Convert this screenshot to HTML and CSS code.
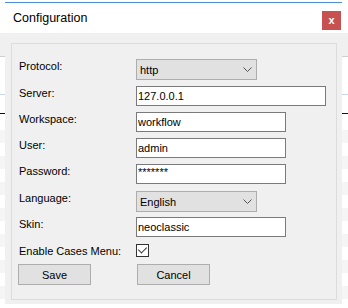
FILE: index.html
```html
<!DOCTYPE html>
<html lang="en">
<head>
  <meta charset="UTF-8">
  <title>Configuration</title>
  <link rel="stylesheet" href="styles.css">
</head>
<body>
  <div class="dialog">
    <div class="titlebar">
      <span class="title">Configuration</span>
      <button class="close" type="button">x</button>
    </div>

    <div class="client">
      <form class="group">
        <label for="protocol">Protocol:</label>
        <div class="select-wrap">
          <select id="protocol" class="select">
            <option>http</option>
            <option>https</option>
          </select>
          <svg class="chevron" width="9" height="5" viewBox="0 0 9 5"><polyline points="0.5,0.5 4.5,4.5 8.5,0.5" fill="none" stroke="#555" stroke-width="1"/></svg>
        </div>

        <label for="server">Server:</label>
        <input id="server" class="field w-long" value="127.0.0.1">

        <label for="workspace">Workspace:</label>
        <input id="workspace" class="field w-mid" value="workflow">

        <label for="user">User:</label>
        <input id="user" class="field w-mid" value="admin">

        <label for="password">Password:</label>
        <input id="password" class="field w-mid pass" value="*******">

        <label for="language">Language:</label>
        <div class="select-wrap">
          <select id="language" class="select">
            <option>English</option>
            <option>Español</option>
          </select>
          <svg class="chevron" width="9" height="5" viewBox="0 0 9 5"><polyline points="0.5,0.5 4.5,4.5 8.5,0.5" fill="none" stroke="#555" stroke-width="1"/></svg>
        </div>

        <label for="skin">Skin:</label>
        <input id="skin" class="field w-mid" value="neoclassic">

        <label for="cases">Enable Cases Menu:</label>
        <input id="cases" class="check" type="checkbox" checked>

        <button class="btn btn-save" type="button">Save</button>
        <button class="btn btn-cancel" type="button">Cancel</button>
      </form>
    </div>
  </div>
</body>
</html>
```

FILE: styles.css
```css
body {
  margin: 0;
  width: 348px;
  height: 308px;
  overflow: hidden;
  font-family: 'Liberation Sans', Arial, sans-serif;
  font-size: 11px;
  color: #000;
  background-color: #fff;
  background-image:
    linear-gradient(to bottom, #fff 0 33px, #f0f0f0 33px 56px, #cfcfcf 56px 57px, #fff 57px 94px, #c9d6ea 94px 95px, #fff 95px 113px, #111 113px 114px, #fff 114px 130px),
    repeating-linear-gradient(to bottom, #f5f5f5 0 13px, #fff 13px 26px);
  background-size: 100% 130px, 100% 100%;
  background-repeat: no-repeat, repeat;
}

.dialog {
  margin: 2px 0 0 5px;
  width: 337px;
  height: 302px;
  box-sizing: border-box;
  border-top: 1px solid #4a8fd8;
  background: #f0f0f0;
  display: flex;
  flex-direction: column;
}

.titlebar {
  height: 30px;
  background: #fff;
  display: flex;
  justify-content: space-between;
  align-items: center;
  padding-left: 8px;
}

.title {
  font-size: 12.5px;
  color: #000;
}

.close {
  align-self: flex-start;
  width: 19px;
  height: 19px;
  margin: 8px 1px 0 0;
  padding: 0;
  border: none;
  background: #c75050;
  color: #fff;
  font-family: 'Liberation Sans', Arial, sans-serif;
  font-size: 11px;
  font-weight: bold;
  line-height: 17px;
}

.client {
  flex: 1;
  padding: 10px 5px 4px 6px;
}

.group {
  margin: 0;
  height: 257px;
  box-sizing: border-box;
  border: 1px solid #dcdcdc;
  padding: 15px 0 0 7px;
  display: grid;
  grid-template-columns: 117px auto;
  grid-template-rows: 27px 26px 26px 26px 27px 26px 27px 20px 21px;
  align-items: start;
  justify-items: start;
}

.group label {
  line-height: 14px;
}

.field {
  height: 20px;
  box-sizing: border-box;
  border: 1px solid #7a7a7a;
  padding: 0 1px;
  margin: 0;
  background: #fff;
  color: #000;
  font-family: inherit;
  font-size: 11px;
  outline: none;
}

.w-long {
  width: 190px;
}

.w-mid {
  width: 150px;
}

.pass {
  letter-spacing: 0;
  line-height: 12px;
  padding-bottom: 4px;
}

.select-wrap {
  position: relative;
  width: 121px;
  height: 21px;
}

.select {
  appearance: none;
  -webkit-appearance: none;
  width: 121px;
  height: 21px;
  box-sizing: border-box;
  margin: 0;
  border: 1px solid #adadad;
  border-radius: 0;
  padding: 0 0 0 3px;
  background: #e1e1e1;
  color: #000;
  font-family: inherit;
  font-size: 11px;
  outline: none;
}

.chevron {
  position: absolute;
  right: 5px;
  top: 8px;
  pointer-events: none;
}

.check {
  appearance: none;
  -webkit-appearance: none;
  position: relative;
  width: 13px;
  height: 13px;
  margin: 0;
  box-sizing: border-box;
  border: 1px solid #333;
  background: #fff;
}

.check:checked::after {
  content: "";
  position: absolute;
  left: 3px;
  top: 0;
  width: 4px;
  height: 7px;
  border-right: 1px solid #333;
  border-bottom: 1px solid #333;
  transform: rotate(45deg);
}

.btn {
  width: 73px;
  height: 21px;
  box-sizing: border-box;
  padding: 0;
  border: 1px solid #adadad;
  background: #e1e1e1;
  color: #000;
  font-family: inherit;
  font-size: 11px;
}

.btn-save {
  margin-left: -1px;
}

.btn-cancel {
  margin-left: 1px;
}
```
